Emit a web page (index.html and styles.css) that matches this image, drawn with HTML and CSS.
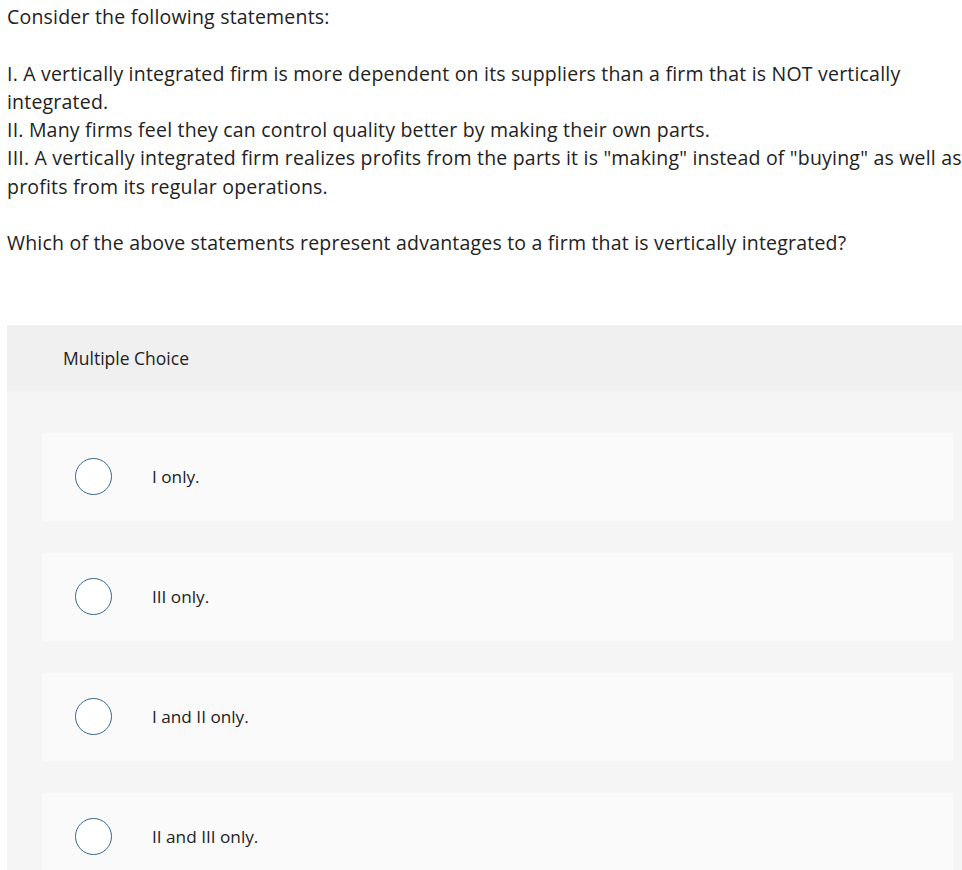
FILE: index.html
```html
<!DOCTYPE html>
<html>
<head>
<meta charset="utf-8">
<link rel="stylesheet" href="styles.css">
</head>
<body>
<div class="page">
  <div class="prompt">
    <p>Consider the following statements:</p>
    <p>I. A vertically integrated firm is more dependent on its suppliers than a firm that is NOT vertically integrated.<br>II. Many firms feel they can control quality better by making their own parts.<br>III. A vertically integrated firm realizes profits from the parts it is "making" instead of "buying" as well as profits from its regular operations.</p>
    <p>Which of the above statements represent advantages to a firm that is vertically integrated?</p>
  </div>
  <div class="panel">
    <div class="panel-head">Multiple Choice</div>
    <div class="panel-body">
      <div class="option"><span class="radio"></span><span class="label">I only.</span></div>
      <div class="option"><span class="radio"></span><span class="label">III only.</span></div>
      <div class="option"><span class="radio"></span><span class="label">I and II only.</span></div>
      <div class="option"><span class="radio"></span><span class="label">II and III only.</span></div>
    </div>
  </div>
</div>
</body>
</html>
```
FILE: styles.css
```css
html, body {
  margin: 0;
  padding: 0;
  background: #fff;
}
body {
  font-family: "Open Sans", "Lato", sans-serif;
  color: #222;
  font-variant-ligatures: none;
}
.page {
  padding-left: 7px;
}
.prompt {
  font-size: 19.5px;
  line-height: 28.3px;
  letter-spacing: 0.2px;
  padding-top: 3px;
}
.prompt p {
  margin: 0 0 28.3px 0;
}
.prompt p:last-child {
  margin-bottom: 0;
}
.panel {
  margin-top: 67px;
  background: #f5f5f5;
}
.panel-head {
  background: #f0f0f0;
  height: 66px;
  display: flex;
  align-items: center;
  padding-left: 56px;
  font-size: 17.5px;
}
.panel-body {
  padding: 42px 9px 20px 35px;
  display: flex;
  flex-direction: column;
  gap: 32px;
}
.option {
  background: #fafafa;
  border-radius: 3px;
  height: 88px;
  display: flex;
  align-items: center;
  padding-left: 33px;
}
.radio {
  width: 35px;
  height: 35px;
  border: 1px solid #3a6690;
  border-radius: 50%;
  background: #fff;
  flex: none;
}
.label {
  margin-left: 40px;
  font-size: 17.2px;
}
```
